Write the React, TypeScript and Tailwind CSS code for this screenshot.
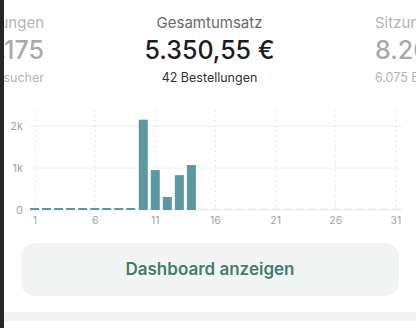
import React from 'react'

const days = Array.from({ length: 31 }, (_, i) => i + 1)
const revenue: Record<number, number> = { 10: 2150, 11: 950, 12: 310, 13: 830, 14: 1070 }

const xOf = (d: number) => 35 + (d - 1) * 12.03 - 4
const yOf = (v: number) => 109 - v * 0.042

const RevenueChart: React.FC = () => (
  <svg width={412} height={130} className="block" style={{ fontFamily: 'Inter, sans-serif' }}>
    {/* horizontal grid */}
    {[0, 1000, 2000].map(v => (
      <line key={v} x1={26} x2={398} y1={yOf(v)} y2={yOf(v)} stroke="#eceeee" strokeWidth={1} />
    ))}
    {/* vertical grid */}
    {[1, 6, 11, 16, 21, 26, 31].map(d => (
      <line key={d} x1={xOf(d)} x2={xOf(d)} y1={9} y2={109} stroke="#e3e6e6" strokeWidth={1} strokeDasharray="2 3" />
    ))}
    {/* y labels */}
    {[['2k', 2000], ['1k', 1000], ['0', 0]].map(([l, v]) => (
      <text key={l} x={19} y={yOf(v as number) + 4} textAnchor="end" fontSize={11} fill="#a3a3a3">
        {l}
      </text>
    ))}
    {/* bars */}
    {days.map(d => {
      const v = revenue[d]
      const x = xOf(d) - 4.5
      if (v) return <rect key={d} x={x} y={yOf(v)} width={9} height={109 - yOf(v)} fill="#5b98a0" />
      if (d < 10) return <rect key={d} x={x - 0.5} y={107} width={9} height={2} fill="#5b98a0" />
      return <rect key={d} x={x} y={107.5} width={9} height={1.5} fill="#e9eeee" />
    })}
    {/* x labels */}
    {[1, 6, 11, 16, 21, 26, 31].map(d => (
      <text key={d} x={xOf(d)} y={123} textAnchor="middle" fontSize={10.5} fill="#a3a3a3">
        {d}
      </text>
    ))}
  </svg>
)

export default function App() {
  return (
    <div className="flex h-[328px] w-[416px] overflow-hidden bg-white" style={{ fontFamily: 'Inter, "Noto Sans", sans-serif' }}>
      <div className="w-[4px] shrink-0 bg-[#262727]" />
      <div className="flex min-w-0 flex-1 flex-col">
        {/* Stats carousel */}
        <div className="flex pt-[13px]">
          <div className="flex w-[40px] shrink-0 flex-col items-end overflow-hidden whitespace-nowrap text-[#b4b4b4]">
            <div className="flex w-full justify-end overflow-hidden text-[15px] leading-[20px]">Einblendungen</div>
            <div className="mt-[2px] flex w-full justify-end overflow-hidden text-[25px] font-medium leading-[30px] text-[#a9a9a9]">12.175</div>
            <div className="mt-[5px] flex w-full justify-end overflow-hidden text-[12.5px] leading-[16px]">9.421 Besucher</div>
          </div>
          <div className="flex w-[331px] shrink-0 flex-col items-center">
            <div className="text-[15px] leading-[20px] text-[#6a6a6a]">Gesamtumsatz</div>
            <div className="mt-[2px] text-[25px] font-medium leading-[30px] text-[#1c1c1c]">5.350,55 €</div>
            <div className="mt-[5px] text-[12.5px] leading-[16px] text-[#333]">42 Bestellungen</div>
          </div>
          <div className="flex min-w-0 flex-1 flex-col overflow-hidden whitespace-nowrap text-[#b4b4b4]">
            <div className="text-[15px] leading-[20px]">Sitzungen</div>
            <div className="mt-[2px] text-[25px] font-medium leading-[30px] text-[#a9a9a9]">8.206</div>
            <div className="mt-[5px] text-[12.5px] leading-[16px]">6.075 Besucher</div>
          </div>
        </div>

        {/* Chart */}
        <div className="mt-[15px]">
          <RevenueChart />
        </div>

        {/* Button */}
        <div className="mt-[12px] px-[17px]">
          <button className="flex h-[53px] w-full items-center justify-center rounded-[14px] bg-[#f2f5f4] text-[17px] font-semibold text-[#447d6e]">
            Dashboard anzeigen
          </button>
        </div>

        <div className="mt-[16px] h-[9px] bg-[#f2f3f3]" />
      </div>
    </div>
  )
}
